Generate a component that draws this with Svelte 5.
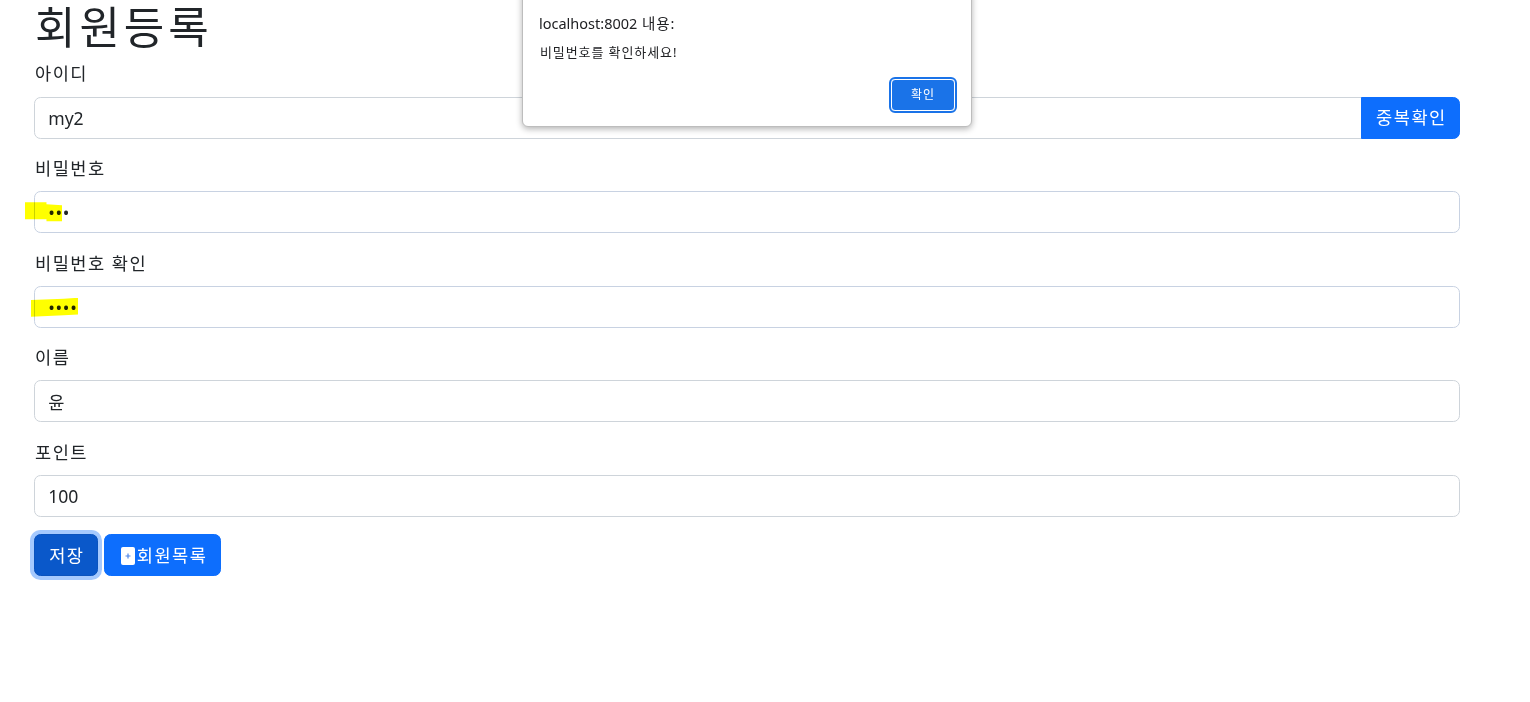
<script>
	const fields = [
		{ label: '비밀번호', type: 'password', value: 'abc', mark: 'mark_a' },
		{ label: '비밀번호 확인', type: 'password', value: 'abcd', mark: 'mark_b' },
		{ label: '이름', type: 'text', value: '윤' },
		{ label: '포인트', type: 'text', value: '100' }
	];
</script>

<main class="page">
	<h1>회원등록</h1>
	<form onsubmit={(e) => e.preventDefault()}>
		<div class="field first">
			<label for="f_id">아이디</label>
			<div class="input_group">
				<input id="f_id" type="text" value="my2" />
				<button type="button" class="btn append">중복확인</button>
			</div>
		</div>
		{#each fields as field, i}
			<div class="field">
				<label for={'f_' + i}>{field.label}</label>
				<div class="input_wrap">
					<input class:secret={field.type === 'password'} id={'f_' + i} type={field.type} value={field.value} />
					{#if field.mark}
						<span class={'mark ' + field.mark}></span>
					{/if}
				</div>
			</div>
		{/each}
		<div class="actions">
			<button type="button" class="btn save">저장</button>
			<button type="button" class="btn list">
				<svg class="memo_icon" viewBox="0 0 14 18" aria-hidden="true">
					<rect width="14" height="18" rx="2" fill="#fff" />
					<path d="M7 6.5v5M4.5 9h5" stroke="#4f86e8" stroke-width="1.2" fill="none" />
				</svg>회원목록
			</button>
		</div>
	</form>
</main>

<div class="alert" role="alertdialog">
	<div class="alert_title">localhost:8002 <span class="ko">내용:</span></div>
	<div class="alert_msg">비밀번호를 확인하세요!</div>
	<div class="alert_foot">
		<button type="button" class="alert_ok">확인</button>
	</div>
</div>

<style>
	:global(body) {
		margin: 0;
		background: #fff;
		color: #212529;
		font-family: 'Noto Sans', 'Noto Sans CJK KR', sans-serif;
	}

	.page {
		padding: 0 70px 40px 34px;
		font-size: 17.6px;
		line-height: 26.4px;
	}

	h1 {
		margin: 0 0 8.6px;
		padding: 1px 0 0 1px;
		height: 51.8px;
		font-size: 44px;
		line-height: 52.8px;
		font-weight: 400;
		letter-spacing: 3.9px;
	}

	.field {
		margin-bottom: 17.6px;
	}

	.first {
		margin-bottom: 17.4px;
	}

	label {
		display: block;
		margin-bottom: 8.8px;
		padding-left: 1px;
		letter-spacing: 1.5px;
		line-height: 25.4px;
		height: 26.4px;
	}

	.input_group {
		display: flex;
		height: 42px;
	}

	.input_wrap {
		position: relative;
	}

	input {
		display: block;
		box-sizing: border-box;
		width: 100%;
		height: 41.8px;
		padding: 6.6px 13.2px;
		border: 1px solid #ced4da;
		border-radius: 6.6px;
		background: #fff;
		color: #212529;
		font: inherit;
		outline: none;
	}

	input.secret {
		border-color: #c8d2e2;
		letter-spacing: 0.7px;
	}

	.input_group input {
		flex: 1;
		height: 42px;
		border-radius: 6.6px 0 0 6.6px;
	}

	.btn {
		box-sizing: border-box;
		height: 41.8px;
		padding: 6.6px 13.2px;
		border: 1px solid #0d6efd;
		border-radius: 6.6px;
		background: #0d6efd;
		color: #fff;
		font: inherit;
		letter-spacing: 1.5px;
	}

	.append {
		height: 42px;
		margin-left: -1px;
		padding-left: 14.2px;
		padding-right: 12.2px;
		border-radius: 0 6.6px 6.6px 0;
	}

	.actions {
		display: flex;
		gap: 6px;
	}

	.save {
		padding-left: 14.2px;
		padding-right: 12.2px;
		background: #0a58ca;
		border-color: #0a53be;
		box-shadow: 0 0 0 4px rgba(49, 132, 253, 0.44);
	}

	.list {
		padding-left: 16px;
		padding-right: 12.2px;
	}

	.memo_icon {
		display: inline-block;
		width: 14px;
		height: 18px;
		margin-right: 2px;
		vertical-align: -3px;
	}

	.mark {
		position: absolute;
		background: #ffff00;
		mix-blend-mode: multiply;
		pointer-events: none;
	}

	.mark_a {
		left: -9px;
		top: 11px;
		width: 37px;
		height: 20px;
		clip-path: polygon(0 0, 58% 0, 58% 10%, 100% 15%, 100% 95%, 58% 95%, 58% 85%, 0 85%);
	}

	.mark_b {
		left: -3px;
		top: 12px;
		width: 47px;
		height: 19px;
		clip-path: polygon(0 12%, 70% 6%, 100% 0, 100% 88%, 70% 92%, 0 100%);
	}

	.alert {
		position: absolute;
		left: 522px;
		top: -8px;
		box-sizing: border-box;
		width: 450px;
		height: 135px;
		padding: 20px 16px 16px;
		border: 1px solid #bdbdbd;
		border-radius: 0 0 6px 6px;
		background: #fff;
		box-shadow: 0 2px 6px rgba(0, 0, 0, 0.3);
		font-size: 14px;
		line-height: 20px;
	}

	.alert_title {
		color: #202124;
		font-size: 14.5px;
	}

	.alert_title .ko {
		margin-left: 1px;
		letter-spacing: 0.9px;
	}

	.alert_msg {
		margin-top: 9px;
		padding-left: 1px;
		font-size: 13px;
		letter-spacing: 0.9px;
		color: #202124;
	}

	.alert_foot {
		display: flex;
		justify-content: flex-end;
		margin-top: 17px;
	}

	.alert_ok {
		box-sizing: border-box;
		width: 64px;
		height: 32px;
		border: 1px solid #fff;
		border-radius: 4px;
		background: #1a73e8;
		outline: 2px solid #1a73e8;
		outline-offset: 0;
		color: #fff;
		font: inherit;
		font-size: 12px;
		letter-spacing: 1px;
	}
</style>
